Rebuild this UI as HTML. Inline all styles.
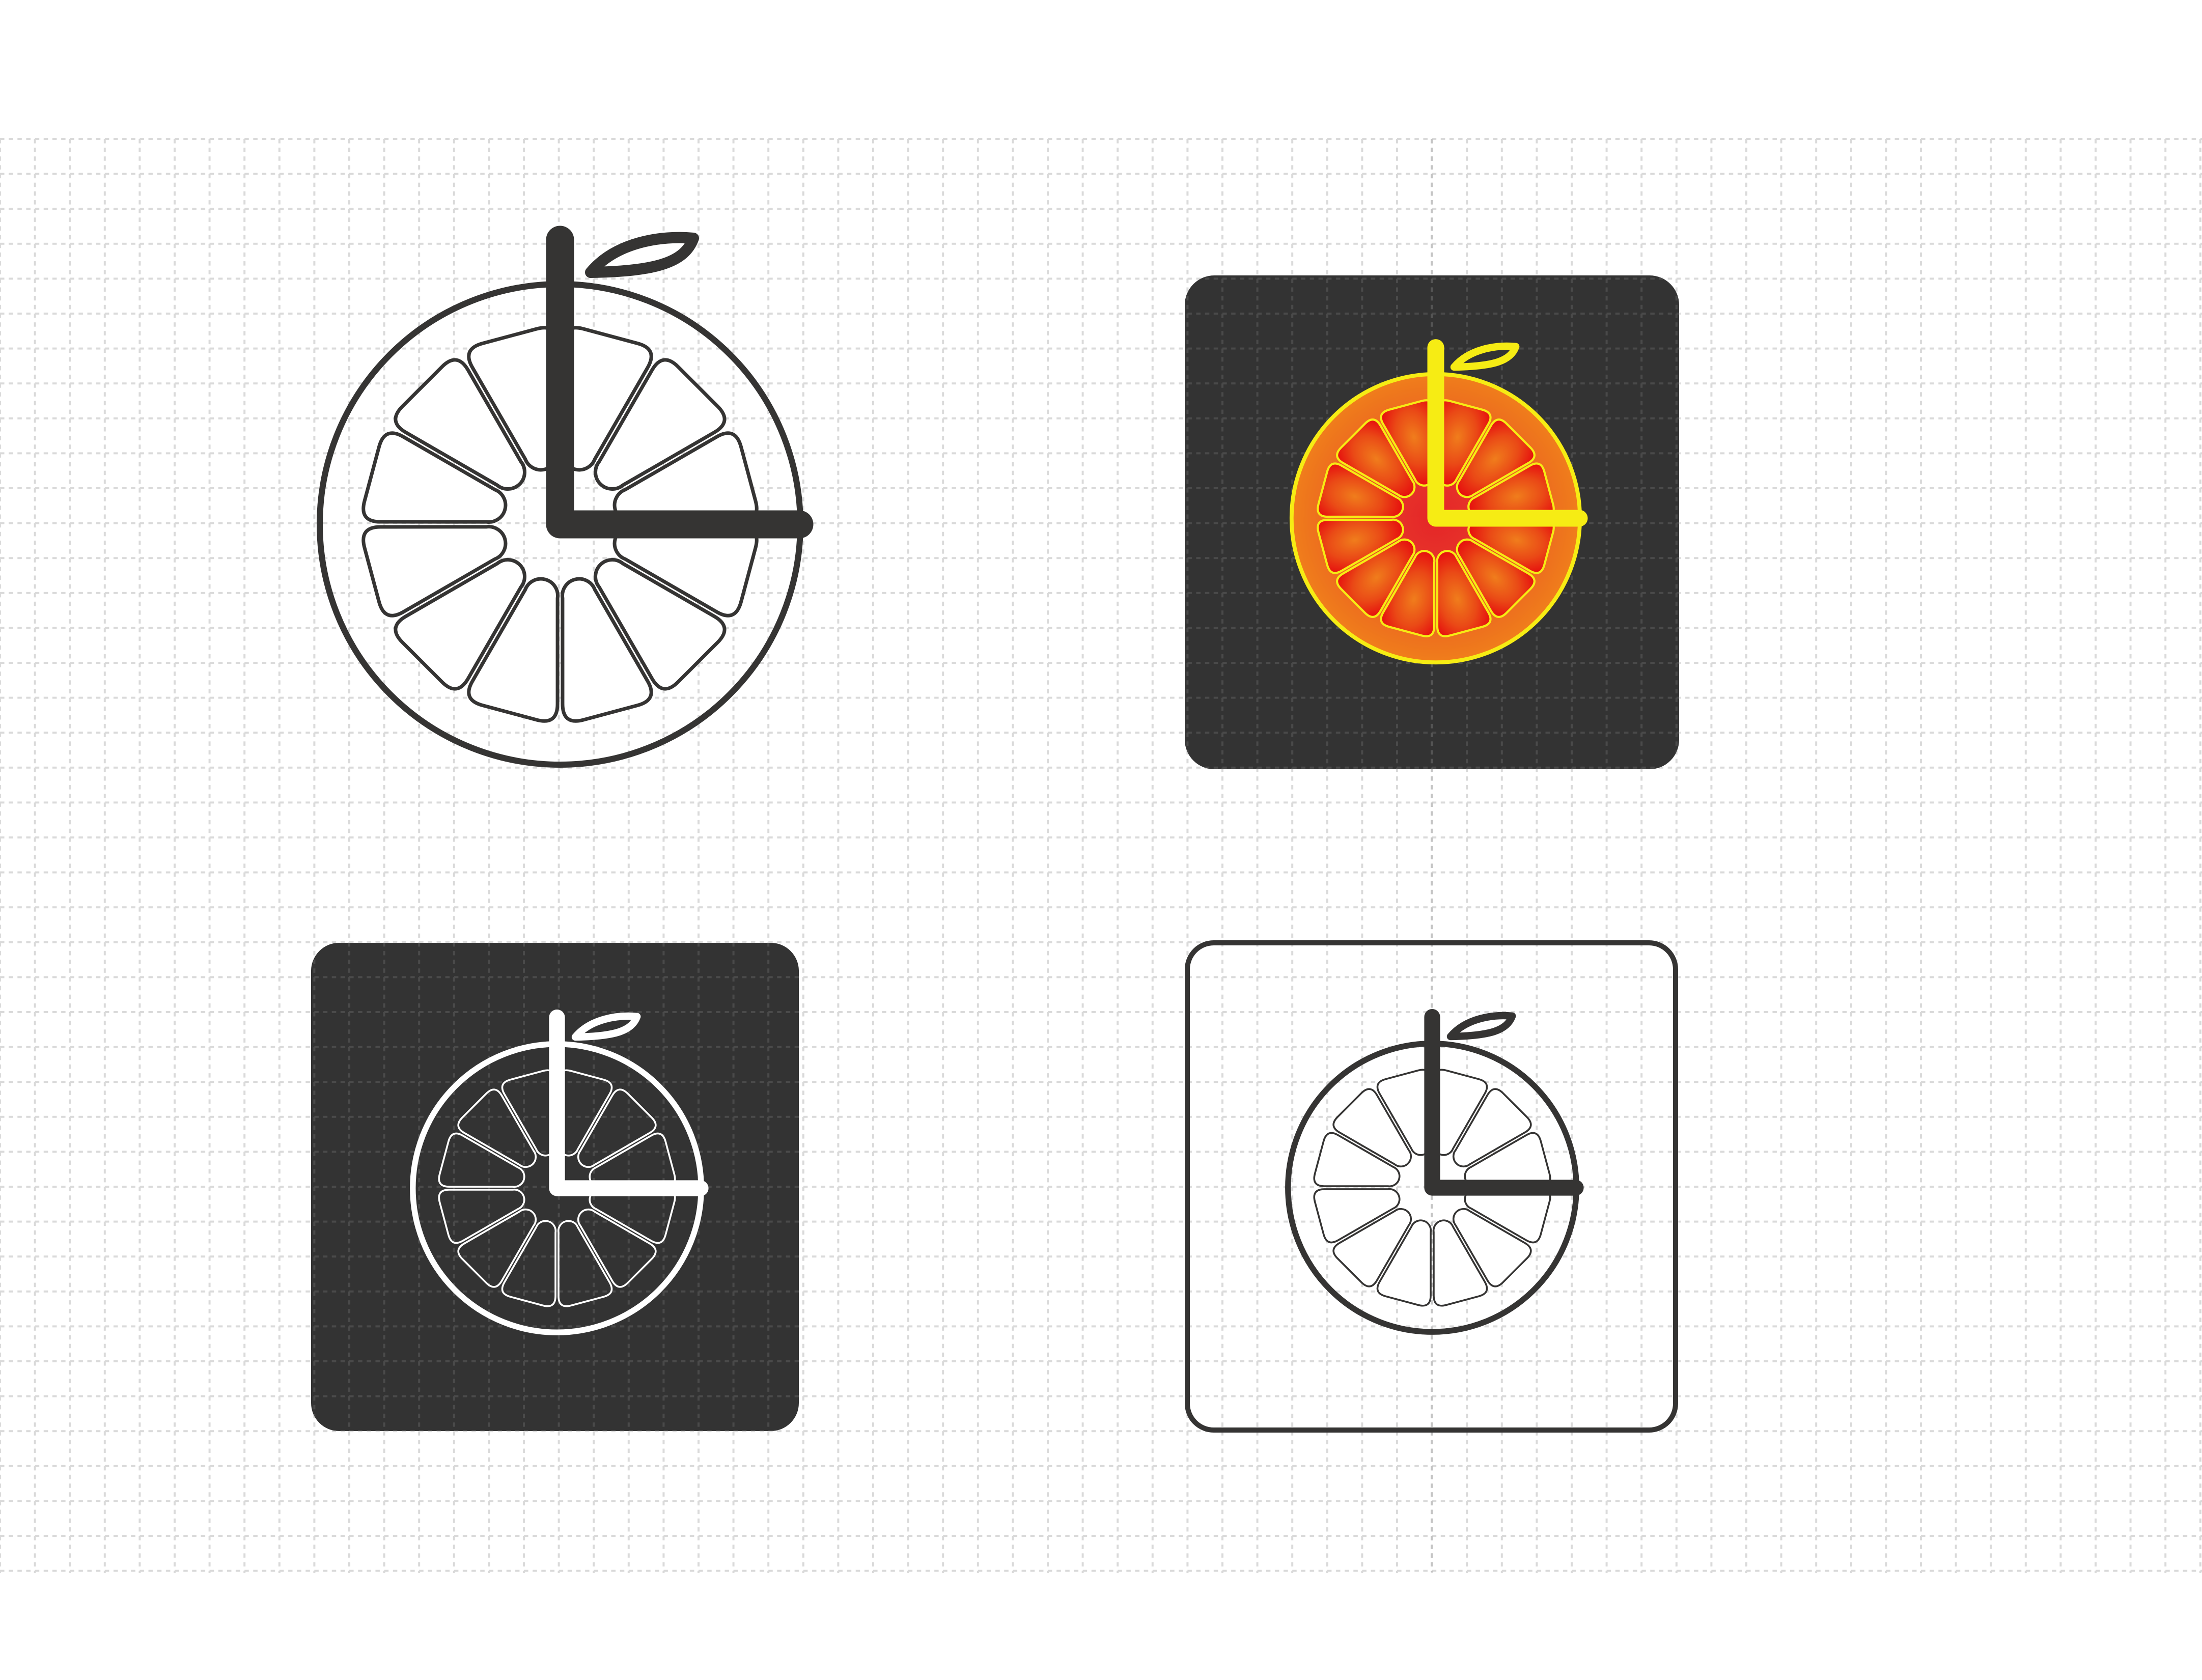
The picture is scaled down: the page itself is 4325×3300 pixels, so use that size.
<!DOCTYPE html>
<html><head><meta charset="utf-8"><style>html,body{margin:0;padding:0;background:#fff}svg{display:block}</style></head>
<body>
<svg width="4325" height="3300" viewBox="0 0 4325 3300" xmlns="http://www.w3.org/2000/svg">
<defs>
<pattern id="g1" patternUnits="userSpaceOnUse" x="-2" y="271" width="68.6" height="68.6">
<line x1="0" y1="2" x2="68.6" y2="2" stroke="#dadada" stroke-width="4" stroke-dasharray="8.575 8.575" stroke-dashoffset="-2"/>
<line x1="2" y1="0" x2="2" y2="68.6" stroke="#dadada" stroke-width="4" stroke-dasharray="8.575 8.575" stroke-dashoffset="-2"/>
</pattern>
<pattern id="g2" patternUnits="userSpaceOnUse" x="-2" y="271" width="68.6" height="68.6">
<line x1="0" y1="2" x2="68.6" y2="2" stroke="#4a4a4a" stroke-width="4" stroke-dasharray="8.575 8.575" stroke-dashoffset="-2"/>
<line x1="2" y1="0" x2="2" y2="68.6" stroke="#4a4a4a" stroke-width="4" stroke-dasharray="8.575 8.575" stroke-dashoffset="-2"/>
</pattern>
<clipPath id="sq"><rect x="2327" y="541" width="971" height="970" rx="58"/><rect x="611" y="1852" width="958" height="959" rx="55"/></clipPath>
<path id="seg" d="M32.8,-141.4 L86.5,-342 Q97.4,-382.8 55,-382.8 L-55,-382.8 Q-97.4,-382.8 -86.5,-342 L-32.8,-141.4 A33 33 0 0 0 32.8,-141.4 Z"/>
<g id="segs">
<use href="#seg" transform="rotate(15)"/><use href="#seg" transform="rotate(45)"/><use href="#seg" transform="rotate(75)"/><use href="#seg" transform="rotate(105)"/><use href="#seg" transform="rotate(135)"/><use href="#seg" transform="rotate(165)"/><use href="#seg" transform="rotate(195)"/><use href="#seg" transform="rotate(225)"/><use href="#seg" transform="rotate(255)"/><use href="#seg" transform="rotate(285)"/><use href="#seg" transform="rotate(315)"/><use href="#seg" transform="rotate(345)"/>
</g>
<path id="leaf" d="M60,-495 C110,-555 200,-568 262,-562 C245,-515 190,-497 60,-495 Z"/>
<path id="ell" d="M0,-559 V0 H470"/>
<radialGradient id="og" cx="0.5" cy="0.5" r="0.5"><stop offset="0" stop-color="#e52528"/><stop offset="0.4" stop-color="#e6382a"/><stop offset="0.75" stop-color="#ec6a1f"/><stop offset="1" stop-color="#f07e1b"/></radialGradient>
<radialGradient id="sg" cx="0.5" cy="0.4" r="0.6"><stop offset="0" stop-color="#f07d1c"/><stop offset="0.55" stop-color="#ea4a16"/><stop offset="1" stop-color="#e60d0e"/></radialGradient>
</defs>
<rect width="4325" height="3300" fill="#fff"/>
<rect x="0" y="271" width="4325" height="2819" fill="url(#g1)"/>
<line x1="2812" y1="273" x2="2812" y2="3088" stroke="#c4c4c4" stroke-width="4" stroke-dasharray="8.575 8.575"/>
<rect x="2327" y="541" width="971" height="970" rx="58" fill="#333"/>
<rect x="611" y="1852" width="958" height="959" rx="55" fill="#333"/>
<g clip-path="url(#sq)"><rect x="0" y="271" width="4325" height="2819" fill="url(#g2)"/>
<line x1="2812" y1="273" x2="2812" y2="3088" stroke="#555" stroke-width="4" stroke-dasharray="8.575 8.575"/></g>
<rect x="2332" y="1852" width="959" height="957" rx="52" fill="none" stroke="#353433" stroke-width="10"/>

<g transform="translate(1100,1030)" stroke="#353433" fill="none">
<circle r="472" stroke-width="12"/>
<g stroke-width="7" fill="#fff"><use href="#segs"/></g>
<use href="#ell" stroke-width="55" stroke-linecap="round" stroke-linejoin="round"/>
<use href="#leaf" stroke-width="22" stroke-linejoin="round" fill="#fff"/>
</g>
<g transform="translate(2820,1018) scale(0.6)" stroke="#f6ec14" fill="none">
<circle r="472" stroke-width="13" fill="url(#og)"/>
<g stroke-width="7" fill="url(#sg)"><use href="#segs"/></g>
<use href="#ell" stroke-width="55" stroke-linecap="round" stroke-linejoin="round"/>
<use href="#leaf" stroke-width="24" stroke-linejoin="round" fill="#333"/>
</g>
<g transform="translate(1094,2334) scale(0.6)" stroke="#fff" fill="none">
<circle r="472" stroke-width="19"/>
<g stroke-width="6"><use href="#segs"/></g>
<use href="#ell" stroke-width="52" stroke-linecap="round" stroke-linejoin="round"/>
<use href="#leaf" stroke-width="24" stroke-linejoin="round" fill="#333"/>
</g>
<g transform="translate(2813,2333) scale(0.6)" stroke="#353433" fill="none">
<circle r="472" stroke-width="19"/>
<g stroke-width="6" fill="#fff"><use href="#segs"/></g>
<use href="#ell" stroke-width="52" stroke-linecap="round" stroke-linejoin="round"/>
<use href="#leaf" stroke-width="24" stroke-linejoin="round" fill="#fff"/>
</g>
</svg>
</body></html>
